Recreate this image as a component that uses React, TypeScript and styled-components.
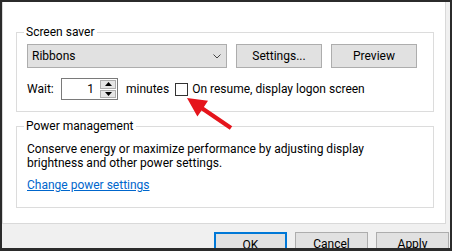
import React from 'react'
import styled, { createGlobalStyle } from 'styled-components'

const GlobalStyle = createGlobalStyle`
    html, body {
        margin: 0;
        padding: 0;
        background: #2b2b2b;
    }
    body {
        font-family: Roboto, "Liberation Sans", sans-serif;
        font-size: 12px;
        color: #000;
    }
`

const Frame = styled.div`
    position: relative;
    box-sizing: border-box;
    width: 452px;
    height: 251px;
    border: 2px solid #2b2b2b;
    border-bottom-width: 3px;
    background: #f0f0f0;
    overflow: hidden;
    display: flex;
    flex-direction: column;
`

const Page = styled.div`
    box-sizing: border-box;
    width: 444px;
    height: 222px;
    flex: none;
    background: #fff;
    border: 1px solid #d9d9d9;
    border-top: none;
    padding: 30px 11px 0 13px;
    display: flex;
    flex-direction: column;
`

const GroupBox = styled.div<{ $top: number }>`
    position: relative;
    box-sizing: border-box;
    margin-top: ${(p) => p.$top}px;
    border: 1px solid #dcdcdc;
`

const Caption = styled.span`
    position: absolute;
    top: -9px;
    left: 7px;
    padding: 0 2px;
    background: #fff;
    line-height: 16px;
    white-space: nowrap;
`

const SaverBody = styled.div`
    padding: 11px 10px 11px 10px;
    display: flex;
    flex-direction: column;
    gap: 10px;
`

const Row = styled.div`
    display: flex;
    align-items: center;
`

const Combo = styled.div`
    box-sizing: border-box;
    width: 200px;
    height: 24px;
    background: #e1e1e1;
    border: 1px solid #adadad;
    display: flex;
    align-items: center;
    justify-content: space-between;
    padding: 0 5px 0 4px;
`

const Button = styled.div<{ $width: number; $default?: boolean }>`
    box-sizing: border-box;
    width: ${(p) => p.$width}px;
    height: 24px;
    margin-left: ${(p) => (p.$default ? 0 : 9)}px;
    background: #e1e1e1;
    border: ${(p) => (p.$default ? '2px solid #0078d7' : '1px solid #adadad')};
    display: flex;
    align-items: center;
    justify-content: center;
    line-height: 16px;
`

const WaitLabel = styled.span`
    width: 34px;
`

const SpinBox = styled.div`
    box-sizing: border-box;
    width: 57px;
    height: 22px;
    border: 1px solid #7a7a7a;
    background: #fff;
    display: flex;
`

const SpinValue = styled.div`
    flex: 1;
    text-align: right;
    padding-right: 5px;
    line-height: 20px;
`

const SpinButtons = styled.div`
    width: 17px;
    display: flex;
    flex-direction: column;
    justify-content: center;
    gap: 1px;
    padding: 1px 0 1px 1px;
`

const SpinButton = styled.div`
    box-sizing: border-box;
    flex: 1;
    margin-right: 1px;
    background: #e5e5e5;
    border: 1px solid #adadad;
    display: flex;
    align-items: center;
    justify-content: center;
`

const Minutes = styled.span`
    margin-left: 8px;
`

const Check = styled.span`
    box-sizing: border-box;
    width: 13px;
    height: 13px;
    margin: 1px 4px 0 6px;
    border: 1px solid #333;
    background: #fff;
`

const PowerBody = styled.div`
    padding: 15px 10px 15px 10px;
    line-height: 14px;
`

const Link = styled.a`
    display: block;
    margin-top: 8px;
    color: #0066cc;
    text-decoration: underline;
    cursor: pointer;
`

const Footer = styled.div`
    display: flex;
    justify-content: flex-end;
    padding: 8px 1px 0 0;
`

const FooterButton = styled(Button)`
    width: 73px;
    height: 23px;
    margin-left: ${(p) => (p.$default ? 0 : 8)}px;
    align-items: flex-start;
    padding-top: 3px;
`

const Overlay = styled.svg`
    position: absolute;
    left: 178px;
    top: 90px;
    pointer-events: none;
`

const Chevron = () => (
    <svg width="8" height="5" viewBox="0 0 8 5">
        <path d="M0.5 0.5 L4 4 L7.5 0.5" fill="none" stroke="#444" strokeWidth="1" />
    </svg>
)

const Triangle = ({ up }: { up?: boolean }) => (
    <svg width="7" height="4" viewBox="0 0 7 4">
        <path d={up ? 'M0 4 L3.5 0 L7 4 Z' : 'M0 0 L3.5 4 L7 0 Z'} fill="#000" />
    </svg>
)

const App = () => {
    return (
        <>
            <GlobalStyle />
            <Frame>
                <Page>
                    <GroupBox $top={0}>
                        <Caption>Screen saver</Caption>
                        <SaverBody>
                            <Row>
                                <Combo>
                                    <span>Ribbons</span>
                                    <Chevron />
                                </Combo>
                                <Button $width={86}>Settings...</Button>
                                <Button $width={86}>Preview</Button>
                            </Row>
                            <Row>
                                <WaitLabel>Wait:</WaitLabel>
                                <SpinBox>
                                    <SpinValue>1</SpinValue>
                                    <SpinButtons>
                                        <SpinButton>
                                            <Triangle up />
                                        </SpinButton>
                                        <SpinButton>
                                            <Triangle />
                                        </SpinButton>
                                    </SpinButtons>
                                </SpinBox>
                                <Minutes>minutes</Minutes>
                                <Check />
                                <span>On resume, display logon screen</span>
                            </Row>
                        </SaverBody>
                    </GroupBox>
                    <GroupBox $top={14}>
                        <Caption>Power management</Caption>
                        <PowerBody>
                            Conserve energy or maximize performance by adjusting display
                            <br />
                            brightness and other power settings.
                            <Link>Change power settings</Link>
                        </PowerBody>
                    </GroupBox>
                </Page>
                <Footer>
                    <FooterButton $width={73} $default>
                        OK
                    </FooterButton>
                    <FooterButton $width={73}>Cancel</FooterButton>
                    <FooterButton $width={73}>Apply</FooterButton>
                </Footer>
                <Overlay width="60" height="40" viewBox="180 92 60 40">
                    <polygon
                        points="187,98 208,100.8 203.9,106.9 232.2,126.2 229.8,129.8 201.5,110.5 197.4,116.6"
                        fill="#e5151c"
                    />
                </Overlay>
            </Frame>
        </>
    )
}

export default App
